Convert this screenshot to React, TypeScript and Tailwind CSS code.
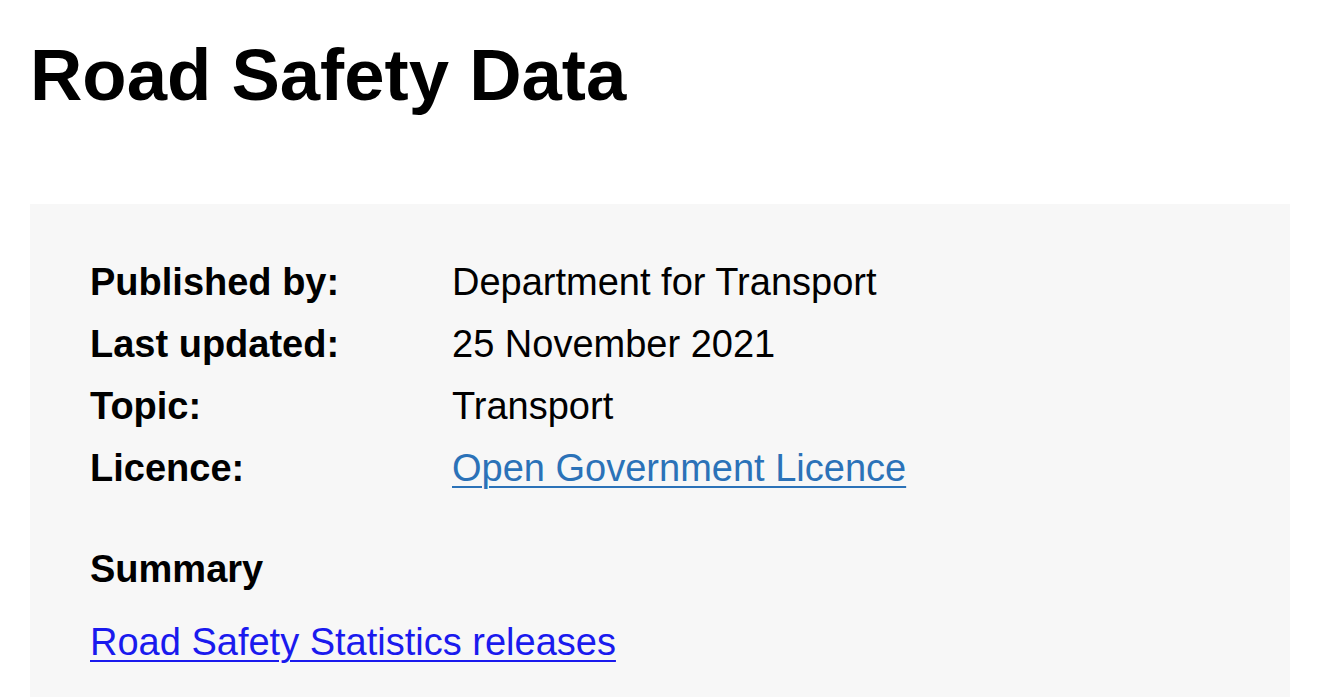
const rows: { label: string; value: string; href?: boolean }[] = [
  { label: "Published by:", value: "Department for Transport" },
  { label: "Last updated:", value: "25 November 2021" },
  { label: "Topic:", value: "Transport" },
  { label: "Licence:", value: "Open Government Licence", href: true },
]

export default function App() {
  return (
    <div className="min-h-screen bg-white pl-[30px] pr-[35px] text-black font-['Liberation_Sans',Arial,sans-serif]">
      <h1 className="pt-[33px] text-[72.5px] leading-[84px] font-bold">Road Safety Data</h1>

      <div className="mt-[87px] bg-[#f7f7f7] px-[60px] pt-[47px] pb-10">
        <dl className="grid grid-cols-[362px_1fr] text-[38px] leading-[62px]">
          {rows.map((row) => (
            <div key={row.label} className="contents">
              <dt className="font-bold">{row.label}</dt>
              <dd>
                {row.href ? (
                  <a href="#" className="text-[#2b72b8] underline underline-offset-[5px] decoration-[2px]">
                    {row.value}
                  </a>
                ) : (
                  row.value
                )}
              </dd>
            </div>
          ))}
        </dl>

        <h2 className="mt-[39px] text-[38px] leading-[62px] font-bold">Summary</h2>
        <p className="mt-[11px] text-[38px] leading-[62px]">
          <a href="#" className="text-[#1a1aee] underline underline-offset-[5px] decoration-[2px]">
            Road Safety Statistics releases
          </a>
        </p>
      </div>
    </div>
  )
}
